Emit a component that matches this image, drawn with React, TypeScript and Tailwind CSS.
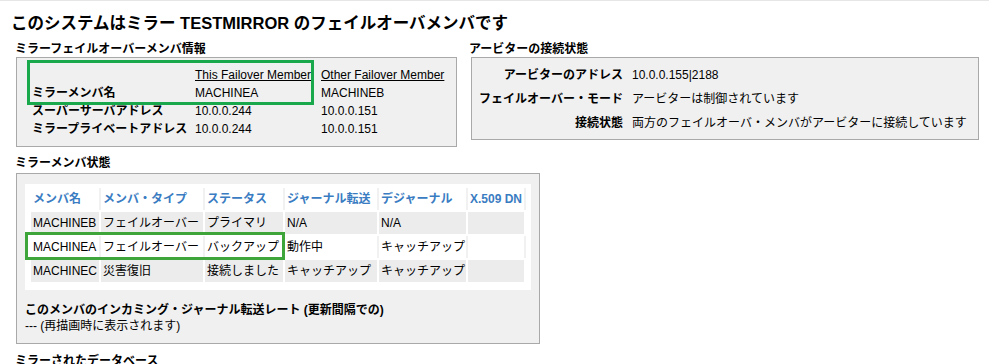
const memberInfo = [
  { label: 'ミラーメンバ名', self: 'MACHINEA', other: 'MACHINEB' },
  { label: 'スーパーサーバアドレス', self: '10.0.0.244', other: '10.0.0.151' },
  { label: 'ミラープライベートアドレス', self: '10.0.0.244', other: '10.0.0.151' },
];

const arbiter = [
  { label: 'アービターのアドレス', value: '10.0.0.155|2188' },
  { label: 'フェイルオーバー・モード', value: 'アービターは制御されています' },
  { label: '接続状態', value: '両方のフェイルオーバ・メンバがアービターに接続しています' },
];

const columns = [
  { title: 'メンバ名', width: 'w-[68px]' },
  { title: 'メンバ・タイプ', width: 'w-[102px]' },
  { title: 'ステータス', width: 'w-[78px]' },
  { title: 'ジャーナル転送', width: 'w-[92px]' },
  { title: 'デジャーナル', width: 'w-[87px]' },
  { title: 'X.509 DN', width: 'w-[56px]' },
];

const members = [
  { id: 1, cells: ['MACHINEB', 'フェイルオーバー', 'プライマリ', 'N/A', 'N/A', ''], shaded: true },
  { id: 2, cells: ['MACHINEA', 'フェイルオーバー', 'バックアップ', '動作中', 'キャッチアップ', ''], shaded: false },
  { id: 3, cells: ['MACHINEC', '災害復旧', '接続しました', 'キャッチアップ', 'キャッチアップ', ''], shaded: true },
];

function SectionTitle({ children }: { children: React.ReactNode }) {
  return <h2 className="font-bold text-[12px] leading-[14px] whitespace-nowrap">{children}</h2>;
}

export default function App() {
  return (
    <div className="h-[364px] overflow-hidden bg-white border-t border-[#e6e6e6] font-['Liberation_Sans','Noto_Sans_CJK_JP',sans-serif] text-[12px] leading-[14px] text-black">
      <h1 className="mt-[12px] ml-[11px] text-[16.5px] leading-[20px] font-bold whitespace-nowrap">
        このシステムはミラー TESTMIRROR のフェイルオーバメンバです
      </h1>

      <div className="flex mt-[9px] ml-[15px]">
        <div className="w-[442px] shrink-0">
          <SectionTitle>ミラーフェイルオーバーメンバ情報</SectionTitle>
          <div className="relative mt-[1px] ml-[1px] w-[441px] h-[90px] border border-[#a9a9a9] bg-[#f0f0f0] pl-[15px] pt-[8px]">
            <div className="grid grid-cols-[163px_126px_auto] auto-rows-[18px] items-center">
              <div />
              <div className="underline">This Failover Member</div>
              <div className="underline">Other Failover Member</div>
              {memberInfo.map((row) => (
                <div key={row.label} className="contents">
                  <div className="font-bold whitespace-nowrap">{row.label}</div>
                  <div>{row.self}</div>
                  <div>{row.other}</div>
                </div>
              ))}
            </div>
            <div className="absolute left-[10px] top-[2px] w-[287px] h-[45px] border-[3px] border-[#19a94c]" />
          </div>
        </div>

        <div className="ml-[12px]">
          <SectionTitle>アービターの接続状態</SectionTitle>
          <div className="mt-[1px] ml-[2px] w-[508px] h-[83px] border border-[#a9a9a9] bg-[#f0f0f0] pt-[5px]">
            <div className="grid grid-cols-[151px_auto] gap-x-[9px] auto-rows-[24px] items-center">
              {arbiter.map((row) => (
                <div key={row.label} className="contents">
                  <div className="font-bold text-right whitespace-nowrap">{row.label}</div>
                  <div className="whitespace-nowrap">{row.value}</div>
                </div>
              ))}
            </div>
          </div>
        </div>
      </div>

      <div className="mt-[9px] ml-[15px]">
        <SectionTitle>ミラーメンバ状態</SectionTitle>
        <div className="relative mt-[3px] ml-[1px] w-[524px] h-[171px] border border-[#a9a9a9] bg-[#f0f0f0] px-[8px] pt-[10px]">
          <div className="bg-white pl-[4px] pr-[4px] pt-[2px] pb-[6px]">
            <table className="table-fixed border-separate border-spacing-[2px] bg-white">
              <thead>
                <tr className="h-[22px]">
                  {columns.map((col) => (
                    <th
                      key={col.title}
                      className={`${col.width} p-0 pl-[2px] text-left font-bold text-[#3a7cc2] whitespace-nowrap shadow-[2px_0_0_#f1f1f1]`}
                    >
                      {col.title}
                    </th>
                  ))}
                </tr>
              </thead>
              <tbody>
                {members.map((m) => (
                  <tr key={m.id} className="h-[22px]">
                    {m.cells.map((cell, i) => (
                      <td
                        key={i}
                        className={
                          m.shaded
                            ? 'p-0 pl-[2px] bg-[#ececec] whitespace-nowrap'
                            : 'p-0 pl-[2px] bg-white whitespace-nowrap shadow-[2px_0_0_#f1f1f1]'
                        }
                      >
                        {cell}
                      </td>
                    ))}
                  </tr>
                ))}
              </tbody>
            </table>
          </div>
          <p className="mt-[13px] font-bold whitespace-nowrap">このメンバのインカミング・ジャーナル転送レート (更新間隔での)</p>
          <p className="mt-[2px] whitespace-nowrap">--- (再描画時に表示されます)</p>
          <div className="absolute left-[8px] top-[58px] w-[260px] h-[28px] border-[3px] border-[#3da53a]" />
        </div>
        <h2 className="mt-[10px] font-bold leading-[14px] whitespace-nowrap">ミラーされたデータベース</h2>
      </div>
    </div>
  );
}
